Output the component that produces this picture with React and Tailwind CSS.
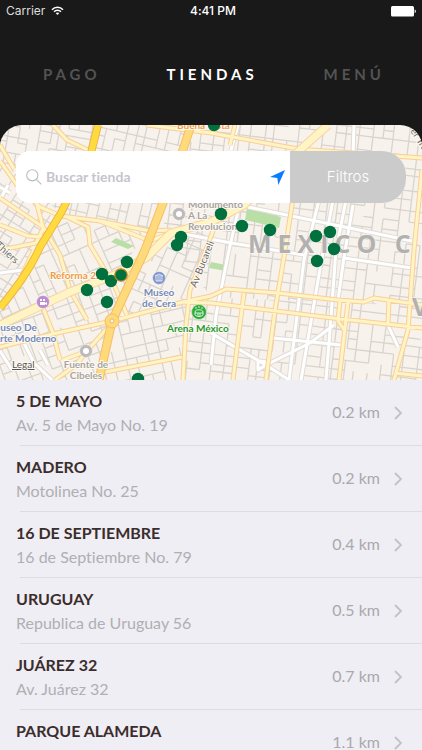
import React from "react";

const STORES = [
  { name: "5 DE MAYO", address: "Av. 5 de Mayo No. 19", distance: "0.2 km" },
  { name: "MADERO", address: "Motolinea No. 25", distance: "0.2 km" },
  { name: "16 DE SEPTIEMBRE", address: "16 de Septiembre No. 79", distance: "0.4 km" },
  { name: "URUGUAY", address: "Republica de Uruguay 56", distance: "0.5 km" },
  { name: "JUÁREZ 32", address: "Av. Juárez 32", distance: "0.7 km" },
  { name: "PARQUE ALAMEDA", address: "", distance: "1.1 km" },
];

const PINS = [
  [214, 0], [221, 89], [242, 101], [270, 105], [316, 111], [330, 107],
  [334, 124], [317, 136], [181, 112], [177, 120], [127, 137], [102, 149],
  [111, 156], [87, 165], [107, 177], [138, 254],
];

// Blocks of minor streets: each area has its own grid direction.
const DISTRICTS = [
  { id: "nw", area: "0,0 98,0 91,28 61,88 0,36", angle: 10, dx: 10, dy: 9, seed: 3 },
  { id: "n", area: "98,0 190,0 163,78 146,108 61,88 91,28", angle: 13, dx: 10, dy: 11, seed: 8 },
  { id: "ne", area: "190,0 422,0 422,180 211,172 165,112 163,78", angle: 7, dx: 12, dy: 11, seed: 5 },
  { id: "w", area: "0,36 61,88 38,125 0,185", angle: 32, dx: 11, dy: 10, seed: 13 },
  { id: "mid", area: "61,88 146,108 117,150 70,168 0,200 0,185 38,125", angle: -24, dx: 10, dy: 11, seed: 21 },
  { id: "c", area: "165,112 220,85 190,172 112,196 146,125", angle: 24, dx: 10, dy: 11, seed: 31 },
  { id: "sw", area: "0,200 70,168 117,150 130,160 112,196 100,255 0,255", angle: -20, dx: 12, dy: 11, seed: 17 },
  { id: "s", area: "112,196 190,172 183,255 100,255", angle: -13, dx: 11, dy: 12, seed: 44 },
  { id: "se", area: "190,172 422,180 422,255 183,255", angle: 7, dx: 12, dy: 10, seed: 50 },
];

function noise(a, b, seed) {
  const n = Math.sin(a * 12.9898 + b * 78.233 + seed * 37.719) * 43758.5453;
  return n - Math.floor(n);
}

function streetPath({ dx, dy, seed }) {
  const parts = [];
  for (let i = -28; i <= 28; i++) {
    for (let j = -28; j <= 28; j++) {
      const x = Math.round(i * dx + noise(i, 0, seed) * 5);
      const nx = Math.round((i + 1) * dx + noise(i + 1, 0, seed) * 5);
      const y = Math.round(j * dy + noise(0, j, seed) * 5);
      const ny = Math.round((j + 1) * dy + noise(0, j + 1, seed) * 5);
      if (noise(i, j, seed) > 0.15) parts.push(`M${x} ${y}V${ny}`);
      if (noise(j, i, seed + 1) > 0.32) parts.push(`M${x} ${y}H${nx}`);
    }
  }
  return parts.join("");
}

const WHITE_ROADS =
  "M238 0L231 25M354 0L353 30M240 78L229 125L216 190L211 240M319 75L304 135L289 255M333 75L321 138L301 255M346 75L336 125L331 192L326 255M353 80L344 132L338 175M344 133L412 143M248 82L311 95L412 116M211 208L266 240L289 255M334 200L310 218L266 240L258 245V236L268 237M273 213L341 220M388 200L398 222M0 75L8 60M0 62L10 68M0 148L22 145M24 218L34 238L52 255M0 226L12 245M40 225L48 240M184 109L226 117L304 130";

const YELLOW_ROADS =
  "M53 0L67 15L92 27M147 0L211 8L298 24L422 33M0 36L17 60L40 82L61 91L100 96L150 106L171 105M0 73L43 102M0 100L28 111L43 112M0 125L36 118L44 102M37 80L43 102L60 130L70 165L87 195M67 92L88 102L90 120L115 162L127 190M100 96L150 116L170 108M43 183L53 208L60 235M0 222L57 208L112 196L183 177L211 171L226 164L278 168L338 175L364 177L374 173L422 180M183 177L211 178L324 192L422 203M222 82L204 130L190 165L186 200L183 255M300 24L292 80L284 132L275 185L266 255M244 168L233 255M422 45L414 125L408 205L394 255M340 175L338 196L345 206M348 177L339 255M389 175L388 199M395 248L422 251M110 200L87 226L76 240L55 255M63 235L87 226M100 248L182 232M0 20L14 44M22 150L34 125M235 0L230 20";

const REFORMA = "M0 200L34 184L70 167L117 149L147 132L171 108L211 97L244 80L301 24L328 0";

function RoadPair({ d, width, fill, edge }) {
  return (
    <g fill="none" strokeLinejoin="round">
      <path d={d} stroke={edge} strokeWidth={width + 2} />
      <path d={d} stroke={fill} strokeWidth={width} />
    </g>
  );
}

function Poi({ x, y, color, children }) {
  return (
    <g>
      <circle cx={x} cy={y} r="6.5" fill={color} stroke="#fff" strokeOpacity="0.6" strokeWidth="0.8" />
      {children}
    </g>
  );
}

function StoreMap() {
  return (
    <svg
      className="block h-[255px] w-full"
      viewBox="0 0 422 255"
      preserveAspectRatio="xMidYMid slice"
      role="img"
      aria-label="Mapa de tiendas"
      fontFamily="Lato, 'Open Sans', sans-serif"
    >
      <defs>
        {DISTRICTS.map((d) => (
          <clipPath id={d.id} key={d.id}>
            <polygon points={d.area} />
          </clipPath>
        ))}
      </defs>
      <rect width="422" height="255" fill="#f8f2ec" />
      {DISTRICTS.map((d) => (
        <g key={d.id} clipPath={`url(#${d.id})`}>
          <path
            d={streetPath(d)}
            transform={`translate(210 125) rotate(${d.angle})`}
            fill="none"
            stroke="#d8d4cd"
            strokeWidth="1.3"
          />
        </g>
      ))}
      <g fill="#b9dfa6">
        <path d="M247 83L281 92L279 103L245 95Z" />
        <path d="M116 113L134 121L128 124L111 117Z" />
        <path d="M211 137L226 140V146L209 143Z" />
      </g>
      <RoadPair d={WHITE_ROADS} width={3} fill="#ffffff" edge="#e0dcd7" />
      <RoadPair d={YELLOW_ROADS} width={3} fill="#fff4c4" edge="#f9cf98" />
      <RoadPair d={REFORMA} width={7} fill="#fff4c4" edge="#f9d3a0" />
      <RoadPair d="M191 0L183 25L163 78L145 125L112 196L99 255" width={7} fill="#ffda7b" edge="#f5bd68" />
      <RoadPair d="M98 0L91 28L61 88L40 122C30 145 16 163 0 183" width={6} fill="#ffdb3d" edge="#eeb44c" />
      <circle cx="112" cy="196" r="7" fill="#ffda7b" stroke="#f5bd68" />
      <circle cx="112" cy="196" r="2" fill="#f8f3ec" stroke="#e5b870" />

      <g
        fill="#b3b1af"
        stroke="#fbf8f4"
        strokeWidth="1.5"
        strokeOpacity="0.7"
        paintOrder="stroke"
        fontSize="25"
        fontWeight="700"
        fontFamily="'Open Sans', sans-serif"
      >
        <text x="248" y="128" letterSpacing="6">MEXICO C</text>
        <text x="412" y="191">V</text>
      </g>
      <g paintOrder="stroke" stroke="#fffaf2" strokeWidth="2" strokeLinejoin="round" fontSize="10" fontWeight="700">
        <g fill="#a5a4a2">
          <text x="188" y="83">Monumento</text>
          <text x="188" y="94">A La</text>
          <text x="188" y="105">Revolucion</text>
          <text x="86" y="243" textAnchor="middle">Fuente de</text>
          <text x="86" y="254" textAnchor="middle">Cibeles</text>
        </g>
        <g fill="#ee9d48">
          <text x="177" y="4">Buena Vista</text>
          <text x="50" y="154">Reforma 222</text>
        </g>
        <g fill="#7189bd">
          <text x="159" y="171" textAnchor="middle">Museo</text>
          <text x="159" y="182" textAnchor="middle">de Cera</text>
          <text x="-9" y="206">Museo De</text>
          <text x="-7" y="217">Arte Moderno</text>
        </g>
        <text x="167" y="207" fill="#249831">Arena México</text>
        <g fill="#6b6b6b" fontWeight="400">
          <text transform="translate(196 163) rotate(-68)">Av Bucareli</text>
          <text transform="translate(-5 121) rotate(42)">Thiers</text>
          <text transform="translate(410 6) rotate(57)">er Tramo</text>
        </g>
        <text x="12" y="243" fontWeight="400" fill="#555" textDecoration="underline">Legal</text>
      </g>

      <Poi x={159} y={153} color="#7e95cb">
        <path d="M156 152V156H162V152M155 151L159 149L163 151ZM158 152V156M160 152V156" fill="none" stroke="#fff" strokeWidth="0.7" />
      </Poi>
      <Poi x={43} y={177} color="#bd8bd1">
        <path d="M40 177H45V180H40ZM45 178L47 177V180L45 179M40 174H42V176H40ZM43 174H45V176H43Z" fill="#fff" />
      </Poi>
      <circle cx="199" cy="187" r="7.5" fill="#2eac3b" stroke="#c8e9c7" strokeWidth="0.8" />
      <path d="M195 187C195 184 203 184 203 187V190C201 192 197 192 195 190ZM195 188H203M196 182V184M199 181V183M202 182V184M198 188V191M200 188V191" fill="none" stroke="#fff" strokeWidth="0.8" />
      <Poi x={179} y={89} color="#bcbbb9"><circle cx="179" cy="89" r="3" fill="#fff" /></Poi>
      <Poi x={86} y={226} color="#bcbbb9"><circle cx="86" cy="226" r="3" fill="#fff" /></Poi>

      <g fill="#00703f">
        {PINS.map(([x, y]) => (
          <circle key={`${x}-${y}`} cx={x} cy={y} r="6.2" />
        ))}
        <circle cx="121" cy="150" r="6.2" stroke="#b98a1e" strokeWidth="1.2" />
      </g>
    </svg>
  );
}

function StatusBar() {
  return (
    <div className="grid h-[22px] grid-cols-3 items-center px-1.5 font-[Inter,sans-serif] text-[12px] leading-4 text-white">
      <div className="flex items-center gap-1.5 text-[#dedede]">
        <span>Carrier</span>
        <svg className="h-[10px] w-[13px]" viewBox="0 0 14 11" fill="none" stroke="#fff" strokeWidth="1.7" aria-hidden="true">
          <path d="M1 4C4 .6 10 .6 13 4M3.2 6.3C5.3 4 8.7 4 10.8 6.3" />
          <path d="M7 10L5 7.8C6 6.8 8 6.8 9 7.8Z" fill="#fff" stroke="none" />
        </svg>
      </div>
      <span className="pl-1 text-center font-medium">4:41 PM</span>
      <svg className="h-[11px] w-[25px] justify-self-end" viewBox="0 0 25 11" fill="#fff" aria-hidden="true">
        <rect width="23" height="10.5" rx="1.5" />
        <path d="M23.7 3.5C25.3 4.2 25.3 6.5 23.7 7.2Z" />
      </svg>
    </div>
  );
}

function Tabs() {
  return (
    <nav className="flex flex-1 items-center justify-between pr-[37px] pl-[43px] text-[15px] leading-5 font-bold tracking-[4px] text-[#535353]">
      <a href="#pago">PAGO</a>
      <a href="#tiendas" aria-current="page" className="text-white">TIENDAS</a>
      <a href="#menu">MENÚ</a>
    </nav>
  );
}

function SearchBar() {
  return (
    <form
      className="absolute inset-x-4 top-[26px] flex h-[52px] overflow-hidden rounded-l-[14px] rounded-r-[24px] bg-white"
      onSubmit={(e) => e.preventDefault()}
    >
      <label className="flex min-w-0 flex-1 items-center gap-1 pl-2.5">
        <svg className="size-4 shrink-0" viewBox="0 0 16 16" fill="none" stroke="#bcbcc0" strokeWidth="1.1" aria-hidden="true">
          <circle cx="6.3" cy="6.3" r="5.6" />
          <path d="M10.4 10.4L15.3 15.3" />
        </svg>
        <input
          type="text"
          aria-label="Buscar tienda"
          placeholder="Buscar tienda"
          className="min-w-0 flex-1 bg-transparent text-[14px] leading-5 font-bold outline-none [font-variant-ligatures:none] placeholder:text-[#c5c5cc]"
        />
      </label>
      <button type="button" aria-label="Mi ubicación" className="pr-[5px] pl-1">
        <svg className="size-[15px]" viewBox="0 0 15 15" fill="#0a7cff" aria-hidden="true">
          <path d="M15 0L8.3 15L7.3 8L0 7Z" />
        </svg>
      </button>
      <button type="button" className="w-[116px] bg-[#cbcbcb] font-[Inter,sans-serif] text-[15px] leading-5 font-light text-white">
        Filtros
      </button>
    </form>
  );
}

function StoreRow({ name, address, distance }) {
  return (
    <li className="pl-4">
      <a href="#tienda" className="flex h-[65px] items-center pr-5">
        <span className="flex min-w-0 flex-1 flex-col">
          <span className="text-[16px] leading-6 font-bold text-[#3b2d2c]">{name}</span>
          <span className="min-h-6 text-[16px] leading-6 text-[#b0afb3]">{address}</span>
        </span>
        <span className="mr-3.5 pb-0.5 text-[16px] leading-6 text-[#aaa9ad]">{distance}</span>
        <svg className="h-[14px] w-2" viewBox="0 0 8 14" fill="none" stroke="#c2c1c6" strokeWidth="1.8" aria-hidden="true">
          <path d="M1 1L7 7L1 13" />
        </svg>
      </a>
      <hr className="ml-1 border-[#dddce2]" />
    </li>
  );
}

export default function App() {
  return (
    <div className="flex h-screen flex-col overflow-hidden bg-[#191919] font-[Lato,sans-serif] [font-variant-ligatures:none]">
      <header className="flex h-[125px] shrink-0 flex-col">
        <StatusBar />
        <Tabs />
      </header>
      <main className="flex min-h-0 flex-1 flex-col">
        <section className="relative shrink-0 overflow-hidden rounded-t-[22px]">
          <StoreMap />
          <SearchBar />
        </section>
        <ul className="min-h-0 flex-1 overflow-hidden bg-[#efeef4]">
          {STORES.map((store) => (
            <StoreRow key={store.name} {...store} />
          ))}
        </ul>
      </main>
    </div>
  );
}
